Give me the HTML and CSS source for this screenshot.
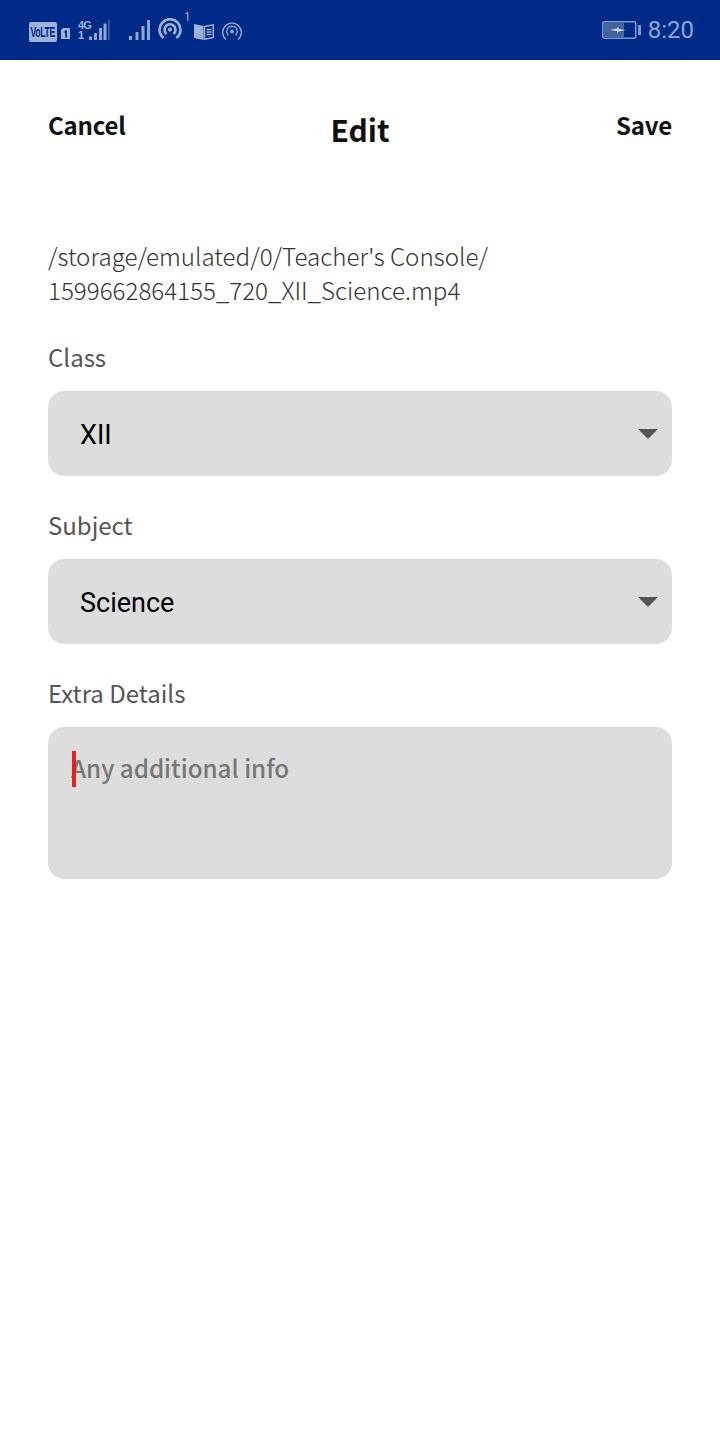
FILE: index.html
```html
<!DOCTYPE html>
<html lang="en">
<head>
<meta charset="utf-8">
<title>Edit</title>
<link rel="stylesheet" href="styles.css">
</head>
<body>
<div class="status">
  <div class="status-left">
    <span class="volte"><span class="volte-text">VoLTE</span></span>
    <svg class="i-sim" width="9" height="11" viewBox="0 0 9 11"><path d="M2 0h7v11H0V2z" fill="#9db2d8"/><path d="M4 2.500h2v7H4.300V4.500H3z" fill="#002a88"/></svg>
    <div class="net">
      <span class="net-4g">4G</span>
      <span class="net-1">1</span>
    </div>
    <svg class="i-bars1" width="21" height="20" viewBox="0 0 21 20"><g fill="#8fa6d2"><rect x="0" y="16.500" width="3" height="3.500"/><rect x="5" y="13" width="3" height="7"/><rect x="10" y="8" width="3" height="12"/><rect x="14.500" y="3.500" width="3" height="16.500"/></g><rect x="19" y="0" width="2" height="20" fill="#36549f"/></svg>
    <svg class="i-bars2" width="21" height="20" viewBox="0 0 21 20"><g fill="#8fa6d2"><rect x="0" y="16" width="3" height="4"/><rect x="6.500" y="12" width="3" height="8"/><rect x="12.500" y="6" width="3" height="14"/><rect x="18" y="0" width="3" height="20"/></g></svg>
    <svg class="i-hot" width="24" height="22" viewBox="0 0 24 22" fill="none" stroke="#9db2d8" stroke-width="2.600"><path d="M5.500 20a10.500 10.500 0 1 1 13 0"/><path d="M8.500 16a5.500 5.500 0 1 1 7 0"/><circle cx="12" cy="11.500" r="2" fill="#9db2d8" stroke="none"/></svg>
    <span class="sup">1</span>
    <svg class="i-book" width="20" height="16" viewBox="0 0 20 16"><path d="M0 0 9.500 2v14L0 14z" fill="#9db2d8"/><path d="M10.500 2.500 19.300 .8v12.700l-8.800 1.800z" fill="none" stroke="#9db2d8" stroke-width="1.400"/><path d="M12.500 5.500h5M12.500 8h5M12.500 10.500h5" stroke="#9db2d8" stroke-width="1.400"/></svg>
    <svg class="i-air" width="20" height="20" viewBox="0 0 20 20" fill="none" stroke="#8fa6d2" stroke-width="1.400"><path d="M4 18.500a9.300 9.300 0 1 1 12 0"/><path d="M6.500 14.500a5.300 5.300 0 1 1 7 0"/><circle cx="10" cy="10.500" r="2" fill="#8fa6d2" stroke="none"/></svg>
  </div>
  <div class="status-right">
    <svg class="i-batt" width="39" height="18" viewBox="0 0 39 18"><rect x="0.750" y="0.750" width="33" height="16.500" rx="2" fill="none" stroke="#7f9acb" stroke-width="1.500"/><rect x="2" y="2" width="20" height="14" fill="#46639f"/><rect x="36" y="4" width="3" height="10" fill="#7f9acb"/><path d="M8 9l7-1.500 1.500-2V8l7.500 1-7.500 1.500-1.500 2V10z" fill="#d3dcec"/></svg>
    <span class="time">8:20</span>
  </div>
</div>

<main class="screen">
  <header class="bar">
    <span class="action">Cancel</span>
    <h1 class="title">Edit</h1>
    <span class="action action-end">Save</span>
  </header>

  <p class="path">/storage/emulated/0/Teacher's Console/<br>1599662864155_720_XII_Science.mp4</p>

  <div class="label">Class</div>
  <div class="select"><span>XII</span><i class="caret"></i></div>

  <div class="label">Subject</div>
  <div class="select"><span>Science</span><i class="caret"></i></div>

  <div class="label">Extra Details</div>
  <div class="area"><i class="cursor"></i><span class="placeholder">Any additional info</span></div>
</main>
</body>
</html>
```
FILE: styles.css
```css
* { box-sizing: border-box; }
html, body { margin: 0; padding: 0; }
body {
  width: 720px;
  height: 1433px;
  background: #fff;
  font-family: "Noto Sans CJK SC", "Noto Sans", sans-serif;
  overflow: hidden;
}
.status {
  height: 60px;
  background: #002a88;
  display: flex;
  justify-content: space-between;
  align-items: center;
  padding: 0 26px 0 29px;
}
.status-left { display: flex; align-items: center; height: 60px; }
.status-right { display: flex; align-items: center; gap: 7px; }
.volte {
  width: 28px;
  height: 20px;
  margin-top: 3px;
  background: #9db2d8;
  color: #002a88;
  border-radius: 2px;
  display: flex;
  align-items: center;
  justify-content: center;
  overflow: hidden;
}
.volte-text {
  font: 700 14px/20px "Liberation Sans", sans-serif;
  letter-spacing: -0.6px;
  transform: scaleX(0.62);
  white-space: nowrap;
}
.i-sim { margin-left: 4px; margin-top: 6px; }
.net {
  margin-left: 8px;
  width: 11px;
  display: flex;
  flex-direction: column;
  color: #9db2d8;
  font: 700 11px/10px "Liberation Sans", sans-serif;
}
.net-4g { letter-spacing: -0.8px; }
.i-bars1 { margin-top: 0; }
.i-bars2 { margin-left: 19px; }
.i-hot { margin-left: 8px; margin-top: -2px; }
.sup {
  align-self: flex-start;
  margin: 10px 0 0 2px;
  width: 10px;
  color: #9db2d8;
  font: 12px/14px "Roboto", sans-serif;
}
.i-book { margin-top: 4px; }
.i-air { margin-left: 8px; margin-top: 2px; }
.time {
  color: #8fa6d2;
  font: 24px/28px "Roboto", sans-serif;
}
.screen { padding: 0 48px; }
.bar {
  height: 120px;
  display: grid;
  grid-template-columns: 1fr auto 1fr;
  align-items: start;
  padding-top: 45px;
}
.action {
  color: #111;
  font-size: 24px;
  font-weight: 700;
  letter-spacing: -0.2px;
  line-height: 40px;
}
.action-end { text-align: right; }
.title {
  margin: 4px 0 0;
  color: #111;
  font-size: 30px;
  font-weight: 700;
  line-height: 40px;
}
.path {
  margin: 59px 0 0;
  color: #333;
  font-size: 24.15px;
  font-weight: 300;
  line-height: 34px;
}
.label {
  height: 34px;
  color: #555;
  font-size: 24px;
  line-height: 34px;
}
.path + .label { margin-top: 33px; }
.select {
  margin-top: 17px;
  height: 85px;
  background: #ddd;
  border-radius: 16px;
  display: flex;
  justify-content: space-between;
  align-items: center;
  padding: 2px 14px 0 32px;
  color: #000;
  font: 27px/34px "Roboto", sans-serif;
}
.select + .label { margin-top: 32px; }
.caret {
  width: 0;
  height: 0;
  margin-top: -2px;
  border-left: 10px solid transparent;
  border-right: 10px solid transparent;
  border-top: 10px solid #555;
}
.area {
  margin-top: 17px;
  height: 152px;
  background: #ddd;
  border-radius: 16px;
  padding: 23px 24px 23px 23px;
  display: flex;
  align-items: flex-start;
  position: relative;
}
.cursor {
  position: absolute;
  left: 24px;
  top: 24px;
  width: 4px;
  height: 36px;
  background: #e8211d;
}
.placeholder {
  color: #777;
  font-size: 24.2px;
  font-weight: 500;
  line-height: 36px;
}
```
